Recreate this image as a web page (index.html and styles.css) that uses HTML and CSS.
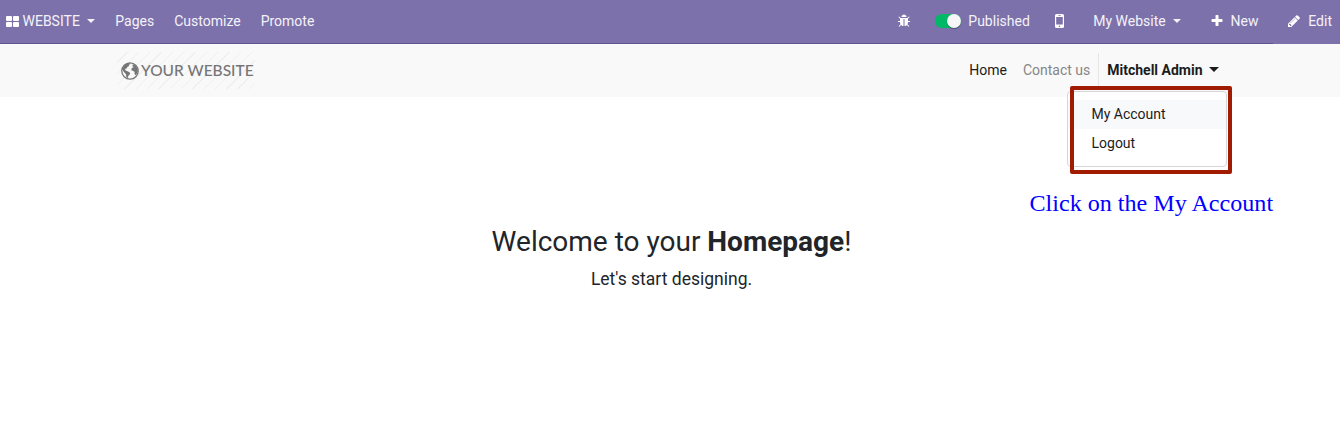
FILE: index.html
```html
<!DOCTYPE html>
<html lang="en">
<head>
<meta charset="utf-8">
<title>Your Website</title>
<link rel="stylesheet" href="styles.css">
</head>
<body>
<div class="topbar">
  <nav class="menu">
    <a class="brand"><svg class="tiles" viewBox="0 0 13 11"><rect width="6" height="5" rx="1"/><rect x="7" width="6" height="5" rx="1"/><rect y="6" width="6" height="5" rx="1"/><rect x="7" y="6" width="6" height="5" rx="1"/></svg>WEBSITE<i class="caret"></i></a>
    <a>Pages</a><a>Customize</a><a>Promote</a>
  </nav>
  <div class="tools">
    <a class="bug"><svg viewBox="0 0 1792 1792"><path d="M1696 960q0 26-19 45t-45 19h-224q0 171-67 290l208 209q19 19 19 45t-19 45q-18 19-45 19t-45-19l-198-197q-5 5-15 13t-42 28.500-65 36.500-82 29-97 13v-896h-128v896q-51 0-101.500-13.500t-87-33-66-39-43.500-32.500l-15-14-183 207q-20 21-48 21-24 0-43-16-19-18-20.500-44.500t15.500-46.500l202-227q-58-114-58-274h-224q-26 0-45-19t-19-45 19-45 45-19h224v-294l-173-173q-19-19-19-45t19-45 45-19 45 19l173 173h844l173-173q19-19 45-19t45 19 19 45-19 45l-173 173v294h224q26 0 45 19t19 45zm-480-576h-640q0-133 93.500-226.500t226.500-93.500 226.500 93.500 93.500 226.500z"/></svg></a>
    <a class="published"><span class="switch"></span>Published</a>
    <a class="mobile"><svg viewBox="0 0 9 14"><path fill-rule="evenodd" d="M1.500 0h6A1.500 1.500 0 0 1 9 1.500v11A1.500 1.500 0 0 1 7.500 14h-6A1.500 1.500 0 0 1 0 12.500v-11A1.500 1.500 0 0 1 1.500 0zM1.200 3v7.500h6.600V3zM3.300 1.100v.6h2.400v-.6zM4.500 11.500a.8.8 0 1 0 0 1.600.8.8 0 0 0 0-1.600z"/></svg></a>
    <a class="site">My Website<i class="caret"></i></a>
    <a class="new"><svg viewBox="0 0 1792 1792"><path d="M1600 736v192q0 40-28 68t-68 28h-416v416q0 40-28 68t-68 28h-192q-40 0-68-28t-28-68v-416h-416q-40 0-68-28t-28-68v-192q0-40 28-68t68-28h416v-416q0-40 28-68t68-28h192q40 0 68 28t28 68v416h416q40 0 68 28t28 68z"/></svg>New</a>
    <a class="edit"><svg viewBox="0 0 1792 1792"><path d="M491 1536l91-91-235-235-91 91v107h128v128h107zm523-928q0-22-22-22-10 0-17 7l-542 542q-7 7-7 17 0 22 22 22 10 0 17-7l542-542q7-7 7-17zm-54-192l416 416-832 832h-416v-416zm683 96q0 53-37 90l-166 166-416-416 166-165q36-38 90-38 53 0 91 38l235 234q37 39 37 91z"/></svg>Edit</a>
  </div>
</div>
<header class="header">
  <a class="logo"><svg class="globe" viewBox="0 0 18 18"><circle cx="9" cy="9" r="8.200"/><path d="M3 4L5.500 1.800 9 1l.3 1.300-1.500.5.3 1.200-1.900 1-.5 1.500-1.600.2.200 1.600 1.500.7 2.200 1 1.300 1.300-1 1.800-1.100 1-.2 2.200-1.700-1.300-.2-2.600-1.700-1.900L1.800 8.500 2 6zM11.800 2.200l2.700 1.400 1.800 2.800.5 2.600-.8 2.800-1.600 1.400-.9-1.500.1-2-1.500-.8-1.500-.6-.3-1.600 1.300-1.200 1.300-.2-1.500-1z"/></svg><span class="name">YOUR WEBSITE</span></a>
  <nav class="links"><a>Home</a><a class="muted">Contact us</a>
    <div class="user">Mitchell Admin<i class="caret"></i>
      <div class="dropdown"><a class="active">My Account</a><a>Logout</a></div>
      <div class="highlight"></div>
    </div>
  </nav>
</header>
<main class="main">
  <div class="note">Click on the My Account</div>
  <h1>Welcome to your <b>Homepage</b>!</h1>
  <p>Let's start designing.</p>
</main>
</body>
</html>
```
FILE: styles.css
```css
* { box-sizing: border-box; }
body { margin: 0; background: #fff; color: #212529; font: 14px/21px Roboto, sans-serif; overflow: hidden; }
.topbar { height: 44px; display: flex; justify-content: space-between; background: linear-gradient(#5f5592, #5f5592) 0 43px / 1273px 1px no-repeat #7c71aa; color: #f4f2f9; padding: 0 8px 2px 6px; }
.menu, .tools, .topbar a { display: flex; align-items: center; white-space: nowrap; }
.menu { gap: 20px; }
.topbar svg { width: 14px; height: 14px; fill: #fff; flex: none; }
.topbar svg.tiles { width: 13px; height: 11px; margin-right: 3.500px; }
.caret { display: inline-block; border: 4px solid transparent; border-top-color: currentColor; border-bottom: 0; margin-left: 7px; }
.topbar .brand .caret { margin-left: 7.500px; }
.published { margin-left: 24px; }
.switch { width: 26px; height: 14px; border-radius: 7px; background: #00b865; display: flex; justify-content: flex-end; margin-right: 7px; }
.switch::after { content: ""; width: 14px; height: 14px; border-radius: 50%; background: #f7f7f7; box-shadow: 0 1px 1px #0005; }
.mobile { margin-left: 25px; }
.topbar .mobile svg { width: 9px; height: 14px; }
.site { margin-left: 29.500px; }
.new { margin-left: 29px; }
.edit { margin-left: 29px; }
.new svg, .edit svg { margin-right: 6.800px; }
.header { height: 53px; background: #f9f9f9; display: flex; justify-content: space-between; align-items: center; padding: 0 121px 0 117px; }
.logo { width: 138px; height: 37px; display: flex; align-items: center; padding-left: 4px; color: #757575; font: 500 15.500px/20px Lato, sans-serif; white-space: nowrap; background: repeating-linear-gradient(135deg, transparent 0 7px, #efefef 7px 8px); }
.name { padding-bottom: 2px; }
.globe { width: 18px; height: 18px; margin-right: 2px; fill: #757575; flex: none; }
.globe circle { fill: none; stroke: #757575; stroke-width: 1.300; }
.links { display: flex; align-items: center; gap: 16px; color: #1c1c1c; }
.links .muted { color: #868686; }
.user { position: relative; height: 35px; padding-left: 8px; margin-left: -8px; border-left: 1px solid #e6e6e6; line-height: 35px; font-weight: 700; white-space: nowrap; }
.user .caret { border-width: 5px 5px 0; margin-left: 6px; vertical-align: 3px; }
.user .caret { margin-left: 6.500px; }
.dropdown { position: absolute; right: -8px; top: 38px; width: 160px; height: 76px; padding: 8px 0; background: #fff; border: 1px solid #d5d5d5; border-radius: 4px; font-weight: 400; line-height: 29px; }
.dropdown a { display: block; padding-left: 23.500px; }
.dropdown .active { background: #f8f9fa; }
.highlight { position: absolute; right: -13px; top: 33px; width: 162px; height: 88px; border: 4px solid #a01b00; border-radius: 2px; }
.main { position: relative; text-align: center; padding: 128px 0 0 3px; }
.main h1 { margin: 0 0 7px; font-size: 28px; font-weight: 400; line-height: 34px; }
.main p { margin: 0; font-size: 17.500px; line-height: 26px; }
.note { position: absolute; left: 1029.500px; top: 92px; color: #00f; font: 24.100px/28px "Liberation Serif", serif; white-space: nowrap; }
```
